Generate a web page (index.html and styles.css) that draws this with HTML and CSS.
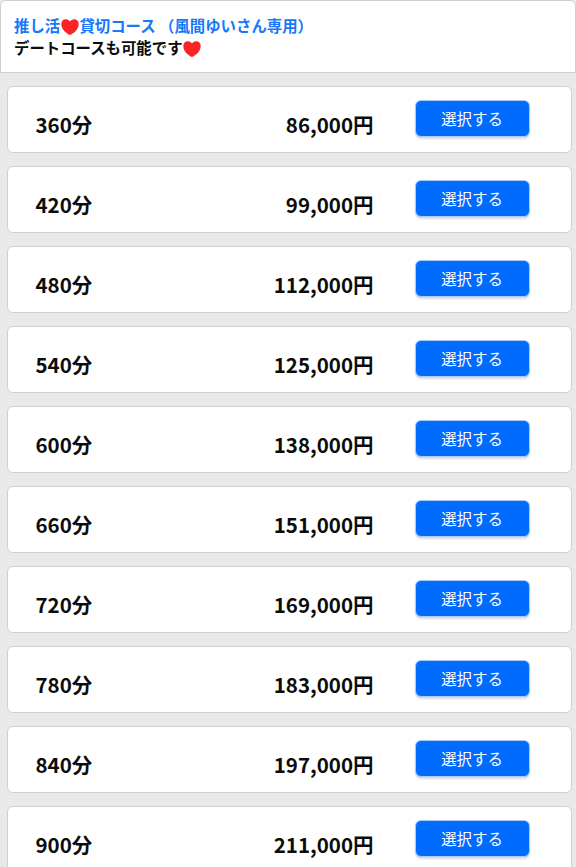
FILE: index.html
```html
<!DOCTYPE html>
<html lang="ja">
  <head>
    <meta charset="UTF-8" />
    <meta name="viewport" content="width=device-width, initial-scale=1.0" />
    <title>コース選択</title>
    <link rel="stylesheet" href="styles.css">
  </head>
  <body>
    <section class="course">
      <header class="course__header">
        <h1 class="course__title">推し活<svg class="heart" viewBox="0 0 18 16"><path d="M9 16C6 14.6 0.3 10.6 0.3 4.9C0.3 2 2.3 0.2 4.8 0.2C6.8 0.2 8.3 1.2 9 2.6C9.7 1.2 11.2 0.2 13.2 0.2C15.7 0.2 17.7 2 17.7 4.9C17.7 10.6 12 14.6 9 16Z"/></svg>貸切コース （風間ゆいさん専用）</h1>
        <p class="course__text">デートコースも可能です<svg class="heart" viewBox="0 0 18 16"><path d="M9 16C6 14.6 0.3 10.6 0.3 4.9C0.3 2 2.3 0.2 4.8 0.2C6.8 0.2 8.3 1.2 9 2.6C9.7 1.2 11.2 0.2 13.2 0.2C15.7 0.2 17.7 2 17.7 4.9C17.7 10.6 12 14.6 9 16Z"/></svg></p>
      </header>
      <ul class="course__list">
        <li class="plan">
          <span class="plan__time">360分</span>
          <span class="plan__price">86,000円</span>
          <button type="button" class="plan__btn">選択する</button>
        </li>
        <li class="plan">
          <span class="plan__time">420分</span>
          <span class="plan__price">99,000円</span>
          <button type="button" class="plan__btn">選択する</button>
        </li>
        <li class="plan">
          <span class="plan__time">480分</span>
          <span class="plan__price">112,000円</span>
          <button type="button" class="plan__btn">選択する</button>
        </li>
        <li class="plan">
          <span class="plan__time">540分</span>
          <span class="plan__price">125,000円</span>
          <button type="button" class="plan__btn">選択する</button>
        </li>
        <li class="plan">
          <span class="plan__time">600分</span>
          <span class="plan__price">138,000円</span>
          <button type="button" class="plan__btn">選択する</button>
        </li>
        <li class="plan">
          <span class="plan__time">660分</span>
          <span class="plan__price">151,000円</span>
          <button type="button" class="plan__btn">選択する</button>
        </li>
        <li class="plan">
          <span class="plan__time">720分</span>
          <span class="plan__price">169,000円</span>
          <button type="button" class="plan__btn">選択する</button>
        </li>
        <li class="plan">
          <span class="plan__time">780分</span>
          <span class="plan__price">183,000円</span>
          <button type="button" class="plan__btn">選択する</button>
        </li>
        <li class="plan">
          <span class="plan__time">840分</span>
          <span class="plan__price">197,000円</span>
          <button type="button" class="plan__btn">選択する</button>
        </li>
        <li class="plan">
          <span class="plan__time">900分</span>
          <span class="plan__price">211,000円</span>
          <button type="button" class="plan__btn">選択する</button>
        </li>
      </ul>
    </section>
  </body>
</html>
```
FILE: styles.css
```css
* {
  margin: 0;
  padding: 0;
  box-sizing: border-box;
}

body {
  height: 867px;
  overflow: hidden;
  color: #0c0c0c;
  background-color: #e9e9e9;
  font-family: "Noto Sans CJK JP", sans-serif;
}

.course__header {
  height: 73px;
  padding: 13px 13px 0;
  border: 1px solid #d0d0d0;
  border-radius: 6px 6px 0 0;
  background-color: #fff;
}
.course__title,
.course__text {
  height: 22px;
  font-size: 15.4px;
  font-weight: 700;
  line-height: 22px;
  white-space: nowrap;
}
.course__title {
  color: #1877fa;
}
.heart {
  width: 18px;
  height: 16px;
  margin: 0 0.6px;
  vertical-align: -2.5px;
  fill: #f92424;
}

.course__list {
  display: flex;
  flex-direction: column;
  gap: 13px;
  padding: 13px 4px 13px 7px;
  list-style: none;
}
.plan {
  display: grid;
  grid-template-columns: 148px 190px 156px;
  align-items: start;
  height: 67px;
  padding: 13px 0 0 27.5px;
  border: 1px solid #d0d0d0;
  border-radius: 6px;
  background-color: #fff;
}
.plan__time,
.plan__price {
  padding-top: 9px;
  font-size: 20.5px;
  font-weight: 700;
  line-height: 30px;
}
.plan__price {
  text-align: right;
}
.plan__btn {
  width: 115px;
  height: 37px;
  margin-left: 41px;
  border: 1px solid #a9c9f7;
  border-radius: 6px;
  color: #fff;
  background-color: #006cff;
  box-shadow: 0 2px 2px rgba(0, 0, 0, 0.15);
  font-family: inherit;
  font-size: 15.4px;
  line-height: 35px;
}
```
